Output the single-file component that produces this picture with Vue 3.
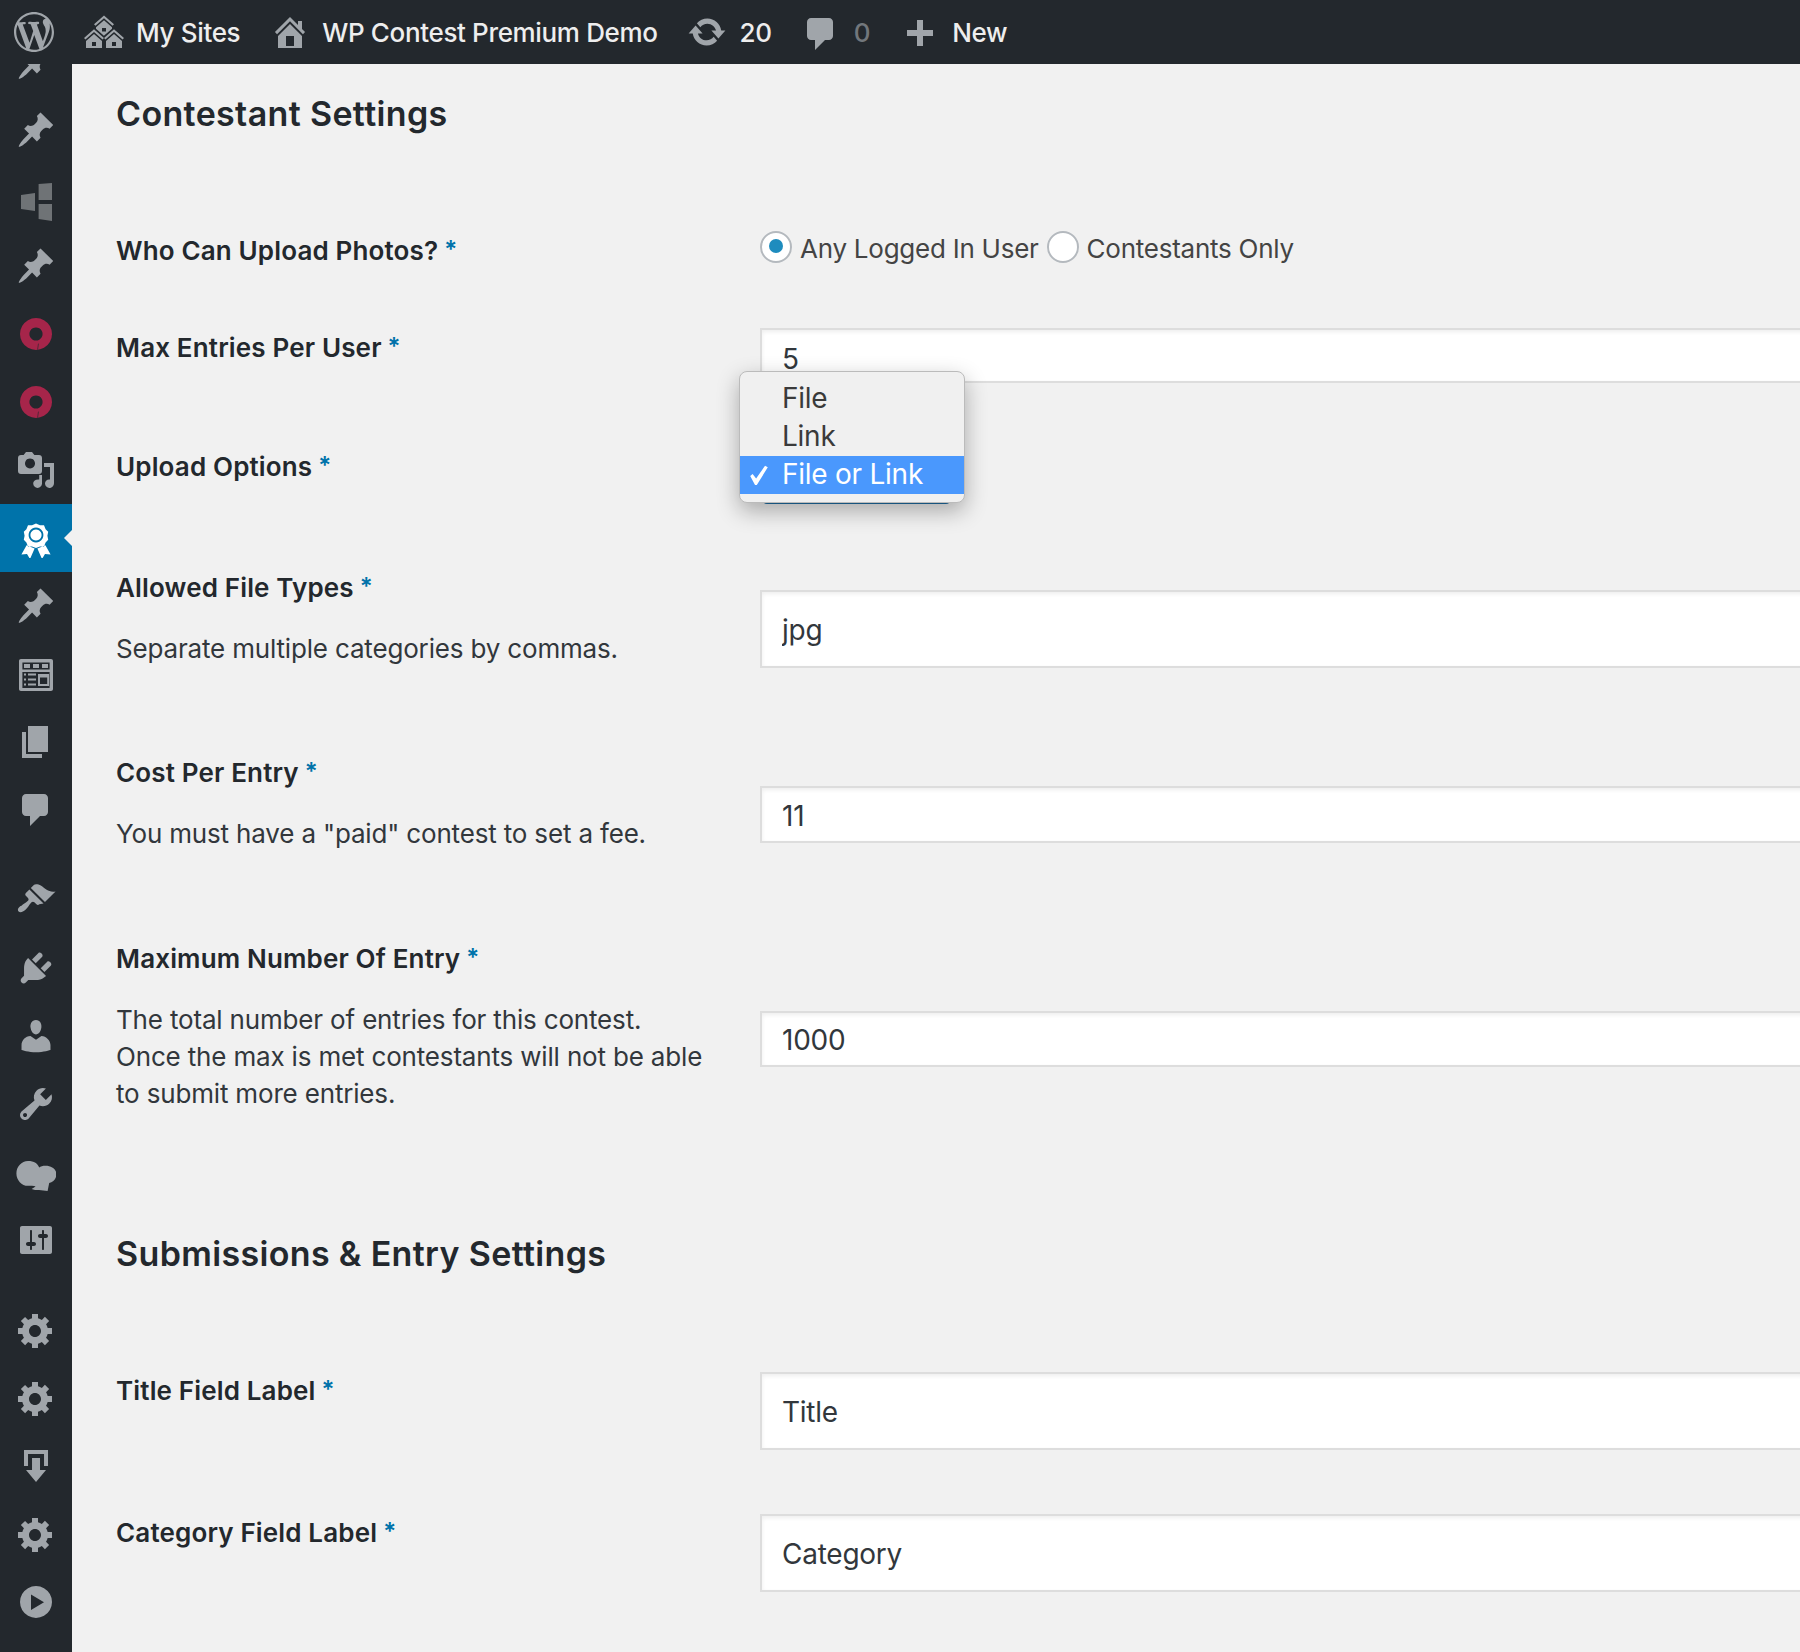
<template>
  <div class="page">
    <header class="topbar">
      <svg class="wp-logo" viewBox="0 0 20 20"><path :d="icons.wordpress" /></svg>
      <div class="bar-item sites">
        <svg class="bar-icon" viewBox="0 0 20 20"><path :d="icons.multisite" /></svg>
        <span>My Sites</span>
      </div>
      <div class="bar-item home">
        <svg class="bar-icon" viewBox="0 0 20 20"><path :d="icons.home" /></svg>
        <span>WP Contest Premium Demo</span>
      </div>
      <div class="bar-item updates">
        <svg class="bar-icon" viewBox="0 0 20 20"><path :d="icons.update" /></svg>
        <span>20</span>
      </div>
      <div class="bar-item comments">
        <svg class="bar-icon" viewBox="0 0 20 20"><path :d="icons.comment" /></svg>
        <span class="muted">0</span>
      </div>
      <div class="bar-item add">
        <svg class="bar-icon" viewBox="0 0 20 20"><path :d="icons.plus" /></svg>
        <span>New</span>
      </div>
    </header>

    <div class="body">
      <aside class="sidebar">
        <div
          v-for="(item, i) in menu"
          :key="i"
          class="menu-item"
          :class="{ active: item.active, 'after-sep': item.sep }"
        >
          <svg class="menu-icon" :class="item.cls" viewBox="0 0 20 20">
            <path fill-rule="evenodd" :d="icons[item.icon]" />
          </svg>
        </div>
      </aside>

      <main class="content">
        <h2 class="heading">Contestant Settings</h2>

        <section class="row row-who">
          <div class="label">Who Can Upload Photos?<span class="req">*</span></div>
          <div class="radios">
            <span class="radio checked"></span>
            <span class="radio-text">Any Logged In User</span>
            <span class="radio"></span>
            <span class="radio-text">Contestants Only</span>
          </div>
        </section>

        <section class="row row-max">
          <div class="label">Max Entries Per User<span class="req">*</span></div>
          <input class="field low" value="5" readonly />
        </section>

        <section class="row row-upload">
          <div class="label">Upload Options<span class="req">*</span></div>
          <div class="select-wrap">
            <div class="select-box"></div>
            <ul class="popup">
              <li>File</li>
              <li>Link</li>
              <li class="selected">
                <svg class="check" viewBox="0 0 20 20"><path d="M2 11l2.2-2 3.2 4.2L15.5 1.5 18 3 8 19h-1.6z" /></svg>
                File or Link
              </li>
            </ul>
          </div>
        </section>

        <section class="row row-types">
          <div>
            <div class="label">Allowed File Types<span class="req">*</span></div>
            <p class="desc">Separate multiple categories by commas.</p>
          </div>
          <input class="field tall" value="jpg" readonly />
        </section>

        <section class="row row-cost">
          <div>
            <div class="label">Cost Per Entry<span class="req">*</span></div>
            <p class="desc">You must have a "paid" contest to set a fee.</p>
          </div>
          <input class="field" value="11" readonly />
        </section>

        <section class="row row-number">
          <div>
            <div class="label">Maximum Number Of Entry<span class="req">*</span></div>
            <p class="desc">The total number of entries for this contest.<br />Once the max is met contestants will not be able<br />to submit more entries.</p>
          </div>
          <input class="field" value="1000" readonly />
        </section>

        <h2 class="heading second">Submissions &amp; Entry Settings</h2>

        <section class="row row-title">
          <div class="label">Title Field Label<span class="req">*</span></div>
          <input class="field tall" value="Title" readonly />
        </section>

        <section class="row row-category">
          <div class="label">Category Field Label<span class="req">*</span></div>
          <input class="field tall" value="Category" readonly />
        </section>
      </main>
    </div>
  </div>
</template>

<script setup>
const icons = {
  wordpress: 'M20 10c0-5.51-4.49-10-10-10C4.48 0 0 4.49 0 10c0 5.52 4.48 10 10 10 5.51 0 10-4.48 10-10zM7.78 15.37L4.37 6.22c.55-.02 1.17-.08 1.17-.08.5-.06.44-1.13-.06-1.11 0 0-1.45.11-2.37.11-.18 0-.37 0-.58-.01C4.12 2.69 6.87 1.11 10 1.11c2.33 0 4.45.87 6.05 2.34-.68-.11-1.65.39-1.65 1.58 0 .74.45 1.36.9 2.1.35.61.55 1.36.55 2.46 0 1.49-1.4 5-1.4 5l-3.03-8.37c.54-.02.82-.17.82-.17.5-.05.44-1.25-.06-1.22 0 0-1.44.12-2.38.12-.87 0-2.33-.12-2.33-.12-.5-.03-.56 1.2-.06 1.22l.92.08 1.26 3.41zM17.41 10c.24-.64.74-1.87.43-4.25.7 1.29 1.05 2.71 1.05 4.25 0 3.29-1.73 6.24-4.4 7.78.97-2.59 1.94-5.2 2.92-7.78zM6.1 18.09C3.12 16.65 1.11 13.53 1.11 10c0-1.3.23-2.48.72-3.59C3.25 10.3 4.67 14.2 6.1 18.09zm4.03-6.63l2.58 6.98c-.86.29-1.76.45-2.71.45-.79 0-1.57-.11-2.29-.33.81-2.38 1.62-4.74 2.42-7.1z',
  multisite: 'M14.27 6.87L10 3.14 5.73 6.87 5 6.14l5-4.38 5 4.38zM14 8.42l-4.05 3.43L6 8.38v-.74l4-3.5 4 3.5v.78zM11 9.7V8H9v1.7h2zm-1.73 4.03L5 10 .73 13.73 0 13l5-4.38L10 13zm10 0L15 10l-4.27 3.73L10 13l5-4.38L20 13zM5 11l4 3.5V18H1v-3.5zm10 0l4 3.5V18h-8v-3.5zM6 17v-2H4v2h2zm10 0v-2h-2v2h2z',
  home: 'M16 8.5l1.53 1.53-1.06 1.06L10 4.62l-6.47 6.47-1.06-1.06L10 2.5l4 4v-2h2v4zm-6-2.46l6 5.99V18H4v-5.97zM12 17v-5H8v5h4z',
  update: 'M10.2 3.28c3.53 0 6.43 2.61 6.92 6h2.08l-3.5 4-3.5-4h2.32c-.45-1.97-2.21-3.45-4.32-3.45-1.45 0-2.73.71-3.54 1.78L4.95 5.66C6.23 4.2 8.11 3.28 10.2 3.28zm-.4 13.44c-3.52 0-6.43-2.61-6.92-6H.8l3.5-4c1.17 1.33 2.33 2.67 3.5 4H5.48c.45 1.97 2.21 3.45 4.32 3.45 1.45 0 2.73-.71 3.54-1.78l1.71 1.95c-1.28 1.46-3.15 2.38-5.25 2.38z',
  comment: 'M5 2h9c1.1 0 2 .9 2 2v7c0 1.1-.9 2-2 2h-2l-5 5v-5H5c-1.1 0-2-.9-2-2V4c0-1.1.9-2 2-2z',
  plus: 'M17 7v3h-5v5H9v-5H4V7h5V2h3v5h5z',
  pin: 'M10.44 3.02l1.82-1.82 6.36 6.35-1.83 1.82c-1.05-.68-2.48-.57-3.41.36l-.75.75c-.92.93-1.04 2.35-.35 3.41l-1.83 1.82-2.41-2.41-2.8 2.79c-.42.42-3.38 2.71-3.8 2.29s1.86-3.39 2.28-3.81l2.79-2.79L4.1 9.36l1.83-1.82c1.05.69 2.48.57 3.4-.36l.75-.75c.93-.92 1.05-2.35.36-3.41z',
  tiles: 'M3 6.5l7-1v9l-7-1zM11.8 1l6.7-.5V9h-6.7zM11.8 11h6.7v8.5l-6.7-1z',
  donut: 'M10 2a8 8 0 1 0 .01 0zM10 6.7a3.3 3.3 0 1 1-.01 0zM11 14.800l.3.1-.3 3.100h-.3z',
  media: 'M5.5 1h3l1.2 1.5H12c.9 0 1.5.6 1.5 1.5v6.5c0 .9-.6 1.5-1.5 1.5H3c-.9 0-1.5-.6-1.5-1.5V4c0-.9.6-1.500 1.500-1.500h1.300zM7.500 4.200a2.500 2.500 0 1 0 .01 0zM14.500 6.500h5v10c0 1.400-1 2.500-2.300 2.500-1.200 0-2.200-1-2.200-2.200 0-1.300 1-2.200 2.500-2V8.500h-3zM13.500 12.500v4.300c0 1.200-1 2.200-2.200 2.200-1.200 0-2.200-1-2.200-2.200 0-1.200 1-2.200 3-2v-2.300z',
  award: 'M10.500 2.800l2 .8h2l.8 2 1.300 1.300-.4 2 .4 2-1.300 1.300-.8 2h-2l-2 .8-2-.8h-2l-.8-2-1.300-1.300.4-2-.4-2 1.300-1.300.8-2h2zM10.500 4.800a3.700 3.700 0 1 0 .01 0zM10.500 5.700a2.800 2.800 0 1 1-.01 0zM5.800 13.600L3.200 18.300 6 18l1.500 2.500 2.300-5.200zM15.200 13.600l2.600 4.700L15 18l-1.500 2.500-2.300-5.200z',
  table: 'M2.500 2.500h15c.6 0 1 .4 1 1v14c0 .6-.4 1-1 1h-15c-.6 0-1-.4-1-1v-14c0-.6.4-1 1-1zM3.200 4.200v3.600h13.600V4.200zM4 5h3v2H4zM8.500 5h3v2h-3zM13 5h3v2h-3zM3.200 9v8h13.600V9zM4 9.800h1v1H4zM6 9.800h4v1H6zM4 12.300h1v1H4zM6 12.300h4v1H6zM4 14.800h1v1H4zM6 14.800h4v1H6zM11 10h5.500v6H11zM12 11.800V15h3.600v-3.200z',
  page: 'M6 15V2h10v13H6zm-1 1h8v2H3V5h2v11z',
  brush: 'M14.48 11.06L7.41 3.99l1.5-1.5c.5-.56 2.3-.47 3.51.32 1.21.8 1.43 1.28 2.91 2.1 1.18.64 2.45 1.26 4.45.85zm-.71.71L6.7 4.7 4.93 6.47c-.39.39-.39 1.02 0 1.41l1.06 1.06c.39.39.39 1.03 0 1.42-.6.6-1.43 1.11-2.21 1.69-.35.26-.7.53-1.01.84C1.43 13.23.4 14.89 1.31 15.8c.92.91 2.57-.12 3.91-1.46.31-.31.58-.66.85-1.02.57-.78 1.08-1.61 1.69-2.21.39-.39 1.02-.39 1.41 0l1.06 1.06c.39.39 1.02.39 1.41 0z',
  plug: 'M13.11 4.36L9.87 7.6 8 5.73l3.24-3.24c.35-.34 1.05-.2 1.56.32.52.51.66 1.21.31 1.55zm-8 1.77l.91-1.12 9.01 9.01-1.19.84c-.71.71-2.63 1.16-3.82 1.16H6.14L4.9 17.26c-.59.59-1.54.59-2.12 0-.59-.58-.59-1.53 0-2.12l1.24-1.24v-3.88c0-1.13.4-3.19 1.09-3.89zm7.26 3.97l3.24-3.24c.34-.35 1.04-.21 1.55.31.52.51.66 1.21.31 1.55l-3.24 3.25z',
  user: 'M10 9.25c-2.27 0-2.73-3.44-2.73-3.44C7 4.02 7.82 2 9.97 2c2.16 0 2.98 2.02 2.71 3.81 0 0-.41 3.44-2.68 3.44zm0 2.57L12.72 10c2.39 0 4.52 2.33 4.52 4.53v2.49s-3.65 1.13-7.24 1.13c-3.65 0-7.24-1.13-7.24-1.13v-2.49c0-2.25 1.94-4.48 4.47-4.48z',
  wrench: 'M16.68 9.77c-1.34 1.34-3.3 1.67-4.95.99l-5.41 6.52c-.99.99-2.59.99-3.58 0s-.99-2.59 0-3.57l6.52-5.42c-.68-1.65-.35-3.61.99-4.95 1.28-1.28 3.12-1.62 4.72-1.06l-2.89 2.89 2.82 2.82 2.86-2.87c.53 1.58.18 3.39-1.08 4.65zM3.81 16.21c.4.39 1.04.39 1.43 0 .4-.4.4-1.04 0-1.43-.39-.4-1.03-.4-1.43 0-.39.39-.39 1.03 0 1.43z',
  cloud: 'M6 4.500C9 4.500 11 5.800 11.600 7.800 12.300 7.100 13.300 6.900 14.800 6.900 17.800 6.900 20.200 8.700 20.200 11.100 20.200 13.500 18.500 15.200 16.600 15.500L15.800 19.500 11.500 19 9.500 19 7.800 18.500 9.800 17.300C9 16.900 7 16.900 6 16.900 2.800 16.900 .2 14 .2 10.700 .2 7.300 2.800 4.500 6 4.500z',
  sliders: 'M18 16V4c0-.55-.45-1-1-1H3c-.55 0-1 .45-1 1v12c0 .55.45 1 1 1h14c.55 0 1-.45 1-1zM8 11h1c.55 0 1 .45 1 1s-.45 1-1 1H8v1.500c0 .28-.22.5-.5.5s-.5-.22-.5-.5V13H6c-.55 0-1-.45-1-1s.45-1 1-1h1V5.500c0-.28.22-.5.5-.5s.5.22.5.5V11zm5-2h-1c-.55 0-1-.45-1-1s.45-1 1-1h1V5.500c0-.28.22-.5.5-.5s.5.22.5.5V7h1c.55 0 1 .45 1 1s-.45 1-1 1h-1v5.500c0 .28-.22.5-.5.5s-.5-.22-.5-.5V9z',
  gear: 'M18 12h-2.180c-.17.7-.44 1.350-.81 1.930l1.540 1.540-2.100 2.100-1.540-1.540c-.58.36-1.230.63-1.910.79V19H8v-2.180c-.68-.16-1.330-.43-1.910-.79l-1.540 1.540-2.120-2.120 1.540-1.540c-.36-.58-.63-1.230-.79-1.910H1V9.030h2.170c.16-.7.44-1.350.8-1.940L2.430 5.550l2.100-2.100 1.540 1.540c.58-.37 1.240-.64 1.930-.81V2h3v2.180c.68.16 1.330.43 1.910.79l1.540-1.540 2.120 2.120-1.540 1.540c.36.59.64 1.240.8 1.940H18V12zm-8.500 1.500c1.660 0 3-1.340 3-3s-1.340-3-3-3-3 1.340-3 3 1.340 3 3 3z',
  download: 'M14.010 4v6h2V2H4v8h2.010V4h8zm-2 2v6h3l-5 6-5-6h3V6h4z',
  play: 'M10 2a8 8 0 1 0 .01 0zM7.500 6.200v7.800l6.500-3.900z'
}

const menu = [
  { icon: 'pin' },
  { icon: 'pin' },
  { icon: 'tiles', cls: 'dim' },
  { icon: 'pin' },
  { icon: 'donut', cls: 'crimson' },
  { icon: 'donut', cls: 'crimson' },
  { icon: 'media', cls: 'nudge' },
  { icon: 'award', cls: 'nudge', active: true },
  { icon: 'pin' },
  { icon: 'table' },
  { icon: 'page' },
  { icon: 'comment' },
  { icon: 'brush', sep: true },
  { icon: 'plug' },
  { icon: 'user' },
  { icon: 'wrench' },
  { icon: 'cloud' },
  { icon: 'sliders' },
  { icon: 'gear', sep: true },
  { icon: 'gear' },
  { icon: 'download' },
  { icon: 'gear' },
  { icon: 'play' }
]
</script>

<style>
html, body { margin: 0; background: #f1f1f1; overflow: hidden; }
</style>

<style scoped>
.page {
  width: 1800px;
  height: 1652px;
  overflow: hidden;
  font-family: Inter, "Noto Sans", sans-serif;
  color: #23282d;
  background: #f1f1f1;
}

.topbar {
  height: 64px;
  background: #23282d;
  display: flex;
  align-items: center;
  color: #eee;
  font-size: 26px;
  font-weight: 500;
  letter-spacing: -0.35px;
}
.wp-logo {
  width: 40px;
  height: 40px;
  margin-left: 14px;
  margin-right: 30px;
  fill: #a0a5aa;
}
.bar-item {
  display: flex;
  align-items: center;
  gap: 13px;
  margin-right: 29px;
}
.sites { gap: 12px; margin-right: 30px; }
.home { gap: 12px; }
.bar-icon {
  width: 40px;
  height: 40px;
  fill: #a0a5aa;
  flex: none;
}
.muted { color: #72777c; }
.comments .bar-icon { margin-top: 4px; }
.add .bar-icon { margin-top: 8px; }

.body { display: flex; height: 1588px; }

.sidebar {
  width: 72px;
  flex: none;
  background: #23282d;
  overflow: hidden;
}
.menu-item {
  height: 68px;
  display: flex;
  align-items: center;
  justify-content: center;
  position: relative;
}
.menu-item:first-child { margin-top: -36px; }
.after-sep { margin-top: 22px; }
.menu-icon {
  width: 40px;
  height: 40px;
  margin-left: -1px;
  fill: #a0a5aa;
}
.menu-icon.nudge { transform: translateX(-1px); }
.menu-icon.dim { fill: #6f7376; filter: blur(0.7px); transform: translate(-1px, 4px); }
.menu-icon.crimson { fill: #a6254a; }
.menu-item.active { background: #0073aa; }
.menu-item.active .menu-icon { fill: #fff; }
.menu-item.active::after {
  content: "";
  position: absolute;
  right: 0;
  top: 50%;
  margin-top: -8px;
  border: 8px solid transparent;
  border-right-color: #f1f1f1;
}

.content {
  flex: 1;
  min-width: 0;
  padding: 30px 0 0 44px;
  overflow: hidden;
}
.heading {
  margin: 0;
  font-size: 34px;
  line-height: 40px;
  font-weight: 600;
  letter-spacing: 0.35px;
}
.heading.second { margin-top: 122px; }

.row {
  display: grid;
  grid-template-columns: 644px 1200px;
  align-items: start;
}
.row-who { margin-top: 97px; }
.row-max { margin-top: 59px; }
.row-upload { margin-top: 64px; }
.row-types { margin-top: 64px; }
.row-cost { margin-top: 85px; }
.row-number { margin-top: 87px; }
.row-title { margin-top: 97px; }
.row-category { margin-top: 63px; }

.label {
  font-size: 26px;
  line-height: 37px;
  font-weight: 600;
  letter-spacing: 0.15px;
}
.req {
  color: #0073aa;
  margin-left: 6px;
  font-size: 24px;
  vertical-align: 2px;
}
.desc {
  margin: 24px 0 0;
  font-size: 26px;
  line-height: 37px;
  letter-spacing: -0.17px;
  color: #32373c;
  max-width: 600px;
}

.radios {
  display: flex;
  align-items: center;
  margin-top: -3px;
  height: 37px;
  font-size: 26px;
  color: #444;
  letter-spacing: -0.25px;
}
.radio {
  width: 32px;
  height: 32px;
  box-sizing: border-box;
  border-radius: 50%;
  border: 2px solid #b4b9be;
  background: #fff;
  margin-right: 8px;
  position: relative;
  flex: none;
}
.radio.checked::after {
  content: "";
  position: absolute;
  left: 7px;
  top: 6px;
  width: 14px;
  height: 14px;
  border-radius: 50%;
  background: #1e8cbe;
}
.radio-text { margin-right: 8px; transform: translateY(2px); }

.field {
  display: block;
  width: 1200px;
  height: 56px;
  box-sizing: border-box;
  border: 2px solid #ddd;
  background: #fff;
  padding: 2px 20px 0;
  font: 400 28px Inter, "Noto Sans", sans-serif;
  letter-spacing: -0.25px;
  color: #32373c;
  outline: none;
  box-shadow: inset 0 2px 4px rgba(0, 0, 0, 0.07);
}
.field.low { height: 55px; padding-top: 6px; }
.field.tall { height: 78px; }
.row-types .field { margin-top: 22px; }
.row-cost .field { margin-top: 33px; height: 57px; }
.row-number .field { margin-top: 72px; }
.row-title .field, .row-category .field { margin-top: 1px; }

.select-wrap { position: relative; height: 57px; }
.select-box {
  width: 187px;
  height: 57px;
  margin-left: 3px;
  background: #1f6da3;
  border-radius: 4px;
}
.popup {
  position: absolute;
  left: -21px;
  top: -76px;
  width: 226px;
  height: 132px;
  box-sizing: border-box;
  margin: 0;
  padding: 8px 0 0;
  list-style: none;
  background: #f0f0f0;
  border: 1px solid #bbb;
  border-radius: 8px;
  box-shadow: 0 8px 22px rgba(0, 0, 0, 0.3);
  font-size: 28px;
  letter-spacing: -0.25px;
  color: #3a3a3a;
}
.popup li {
  height: 38px;
  line-height: 36px;
  padding-left: 42px;
  position: relative;
}
.popup .selected {
  background: #4a98fd;
  color: #fff;
}
.check {
  position: absolute;
  left: 8px;
  top: 8px;
  width: 22px;
  height: 22px;
  fill: #fff;
}
</style>
